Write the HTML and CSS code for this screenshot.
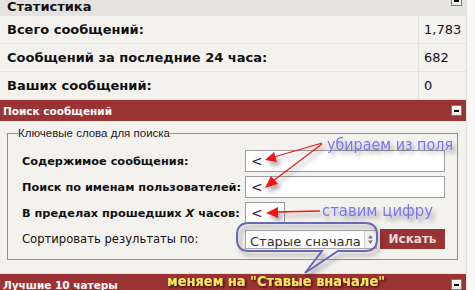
FILE: index.html
```html
<!DOCTYPE html>
<html lang="ru">
<head>
  <meta charset="UTF-8">
  <title>Статистика</title>
  <link rel="stylesheet" href="styles.css">
</head>
<body>
  <div class="page">
    <div class="bar bar-stat">Статистика <span class="toggle"></span></div>
    <div class="stats">
      <div class="stat-row"><div class="cell">Всего сообщений:</div><div class="cell val">1,783</div></div>
      <div class="stat-row"><div class="cell">Сообщений за последние 24 часа:</div><div class="cell val">682</div></div>
      <div class="stat-row"><div class="cell">Ваших сообщений:</div><div class="cell val">0</div></div>
    </div>

    <div class="bar bar-red">Поиск сообщений <span class="toggle"></span></div>
    <form class="search">
      <fieldset>
        <legend>Ключевые слова для поиска</legend>
        <div class="fields">
          <label for="body">Содержимое сообщения:</label>
          <input type="text" id="body" value="&lt;">

          <label for="user">Поиск по именам пользователей:</label>
          <input type="text" id="user" value="&lt;">

          <label for="hours">В пределах прошедших <i>X</i> часов:</label>
          <input type="text" id="hours" class="short" value="&lt;">

          <label for="sort" class="plain">Сортировать результаты по:</label>
          <div class="actions">
            <div class="select">
              <select id="sort">
                <option>Старые сначала</option>
                <option>Новые сначала</option>
              </select>
              <span class="spin">
                <svg width="7" height="11" viewBox="0 0 7 11"><path d="M3.5 1 L6 4.5 H1 Z M3.5 10 L6 6.5 H1 Z" fill="#777"/></svg>
              </span>
            </div>
            <button type="submit">Искать</button>
          </div>
        </div>
      </fieldset>
    </form>

    <div class="bar bar-red">Лучшие 10 чатеры <span class="toggle"></span></div>
  </div>

  <!-- notes drawn over the screenshot -->
  <svg class="notes" width="475" height="290" viewBox="0 0 475 290">
    <defs>
      <filter id="shade" x="-20%" y="-40%" width="150%" height="200%">
        <feDropShadow dx="3" dy="4" stdDeviation="2" flood-color="#000" flood-opacity="0.35"/>
      </filter>
      <filter id="dark" x="-10%" y="-40%" width="130%" height="200%">
        <feDropShadow dx="1.5" dy="1.5" stdDeviation="0.8" flood-color="#3a0000" flood-opacity="0.9"/>
      </filter>
    </defs>

    <g filter="url(#shade)" stroke="#f01818" fill="#f01818" stroke-width="1.3">
      <line x1="322" y1="143" x2="274" y2="157"/>
      <polygon points="265,160 277,162 274,152" stroke="none"/>
      <line x1="322" y1="144" x2="273" y2="181"/>
      <polygon points="265,188 278,184 271,176" stroke="none"/>
      <line x1="320" y1="211" x2="276" y2="212"/>
      <polygon points="266,213 278,218 278,207" stroke="none"/>
    </g>

    <path filter="url(#shade)" fill="none" stroke="#6868b4" stroke-width="2"
      d="M249 223 H365 Q377 223 377 235 V239 Q377 251 365 251 H338 L305 273 L322 251 H249 Q237 251 237 239 V235 Q237 223 249 223 Z"/>

    <g class="note-blue" filter="url(#shade)">
      <text x="327" y="150" textLength="126" lengthAdjust="spacingAndGlyphs">убираем из поля</text>
      <text x="322" y="216" textLength="111" lengthAdjust="spacingAndGlyphs">ставим цифру</text>
    </g>
    <text class="note-yellow" filter="url(#dark)" x="167" y="286" textLength="218" lengthAdjust="spacingAndGlyphs">меняем на "Ставые вначале"</text>
  </svg>
</body>
</html>
```

FILE: styles.css
```css
body {
  margin: 0;
  background-color: #f9f8f6;
  font-family: "DejaVu Sans", Verdana, sans-serif;
  overflow: hidden;
  position: relative;
}
.page {
  width: 466px;
  margin-top: -5px;
  background-color: #f4f2ef;
  border-right: 1px solid #e4e2df;
}
.bar {
  height: 21px;
  display: flex;
  align-items: center;
  justify-content: space-between;
  padding: 0 4px 0 3px;
}
.bar-stat {
  background-color: #e5e3e0;
  color: #111;
  font-weight: bold;
  font-size: 13px;
  padding-left: 7px;
  padding-top: 2px;
  height: 19px;
}
.bar-stat .toggle {
  align-self: flex-start;
  margin-top: -2px;
}
.bar-red {
  background-color: #993334;
  color: #fff;
  font-weight: bold;
  font-size: 10.5px;
  border-top: 1px solid #e4e2df;
}
.toggle {
  width: 9px;
  height: 9px;
  border: 1px solid #7b7b7b;
  background: linear-gradient(#ffffff, #e8e8e8);
  position: relative;
}
.toggle::after {
  content: "";
  position: absolute;
  left: 2px;
  top: 4px;
  width: 5px;
  height: 2px;
  background-color: #000;
}
.stat-row {
  display: grid;
  grid-template-columns: 418px 1fr;
  border-top: 1px solid #e4e2df;
}
.stat-row:first-child {
  border-top: none;
}
.cell {
  height: 27px;
  display: flex;
  align-items: center;
  padding-left: 7px;
  font-size: 13px;
  font-weight: bold;
  color: #111;
}
.cell.val {
  border-left: 1px solid #e4e2df;
  padding-left: 5px;
  font-weight: normal;
}
.search {
  padding: 6px 8px 13px 7px;
}
fieldset {
  margin: 0;
  border: 1px solid #929292;
  padding: 11px 11px 10px 14px;
}
legend {
  font-family: "Liberation Sans", Arial, sans-serif;
  font-size: 11.5px;
  color: #222;
  padding: 0;
  margin-left: -4px;
}
.fields {
  display: grid;
  grid-template-columns: 223px auto;
  row-gap: 4px;
  align-items: center;
}
label {
  font-size: 11.3px;
  font-weight: bold;
  color: #111;
}
label.plain {
  font-weight: normal;
  font-size: 11.6px;
}
input {
  width: 200px;
  height: 22px;
  box-sizing: border-box;
  border: 1px solid #9c9c9c;
  background: #fff;
  padding: 0 5px;
  font-family: "DejaVu Sans", sans-serif;
  font-size: 14px;
  color: #1a1a4a;
}
input.short {
  width: 40px;
}
.actions {
  display: flex;
  gap: 3px;
  align-items: center;
  margin-top: 1px;
}
.select {
  width: 132px;
  height: 19px;
  box-sizing: border-box;
  border: 1px solid #a8a8a8;
  background: #fff;
  position: relative;
}
select {
  appearance: none;
  border: none;
  background: transparent;
  width: 100%;
  height: 100%;
  padding: 0 0 0 4px;
  font-family: "DejaVu Sans", sans-serif;
  font-size: 13px;
  color: #333;
}
.spin {
  position: absolute;
  right: 0;
  top: 0;
  width: 11px;
  height: 17px;
  border-left: 1px solid #d0d0d0;
  background: #f2f2f2;
  display: flex;
  align-items: center;
  justify-content: center;
}
button {
  width: 65px;
  height: 20px;
  border: none;
  background-color: #993334;
  color: #f0dcdd;
  font-family: "DejaVu Sans", sans-serif;
  font-weight: bold;
  font-size: 12px;
  padding: 0;
}
.notes {
  position: absolute;
  top: 0;
  left: 0;
  pointer-events: none;
}
.note-blue text {
  font-family: "Comic Sans MS", "DejaVu Sans", sans-serif;
  font-size: 15px;
  fill: #7676ee;
}
.note-yellow {
  font-family: "Comic Sans MS", "DejaVu Sans", sans-serif;
  font-size: 14px;
  font-weight: bold;
  fill: #f4e860;
}
```
